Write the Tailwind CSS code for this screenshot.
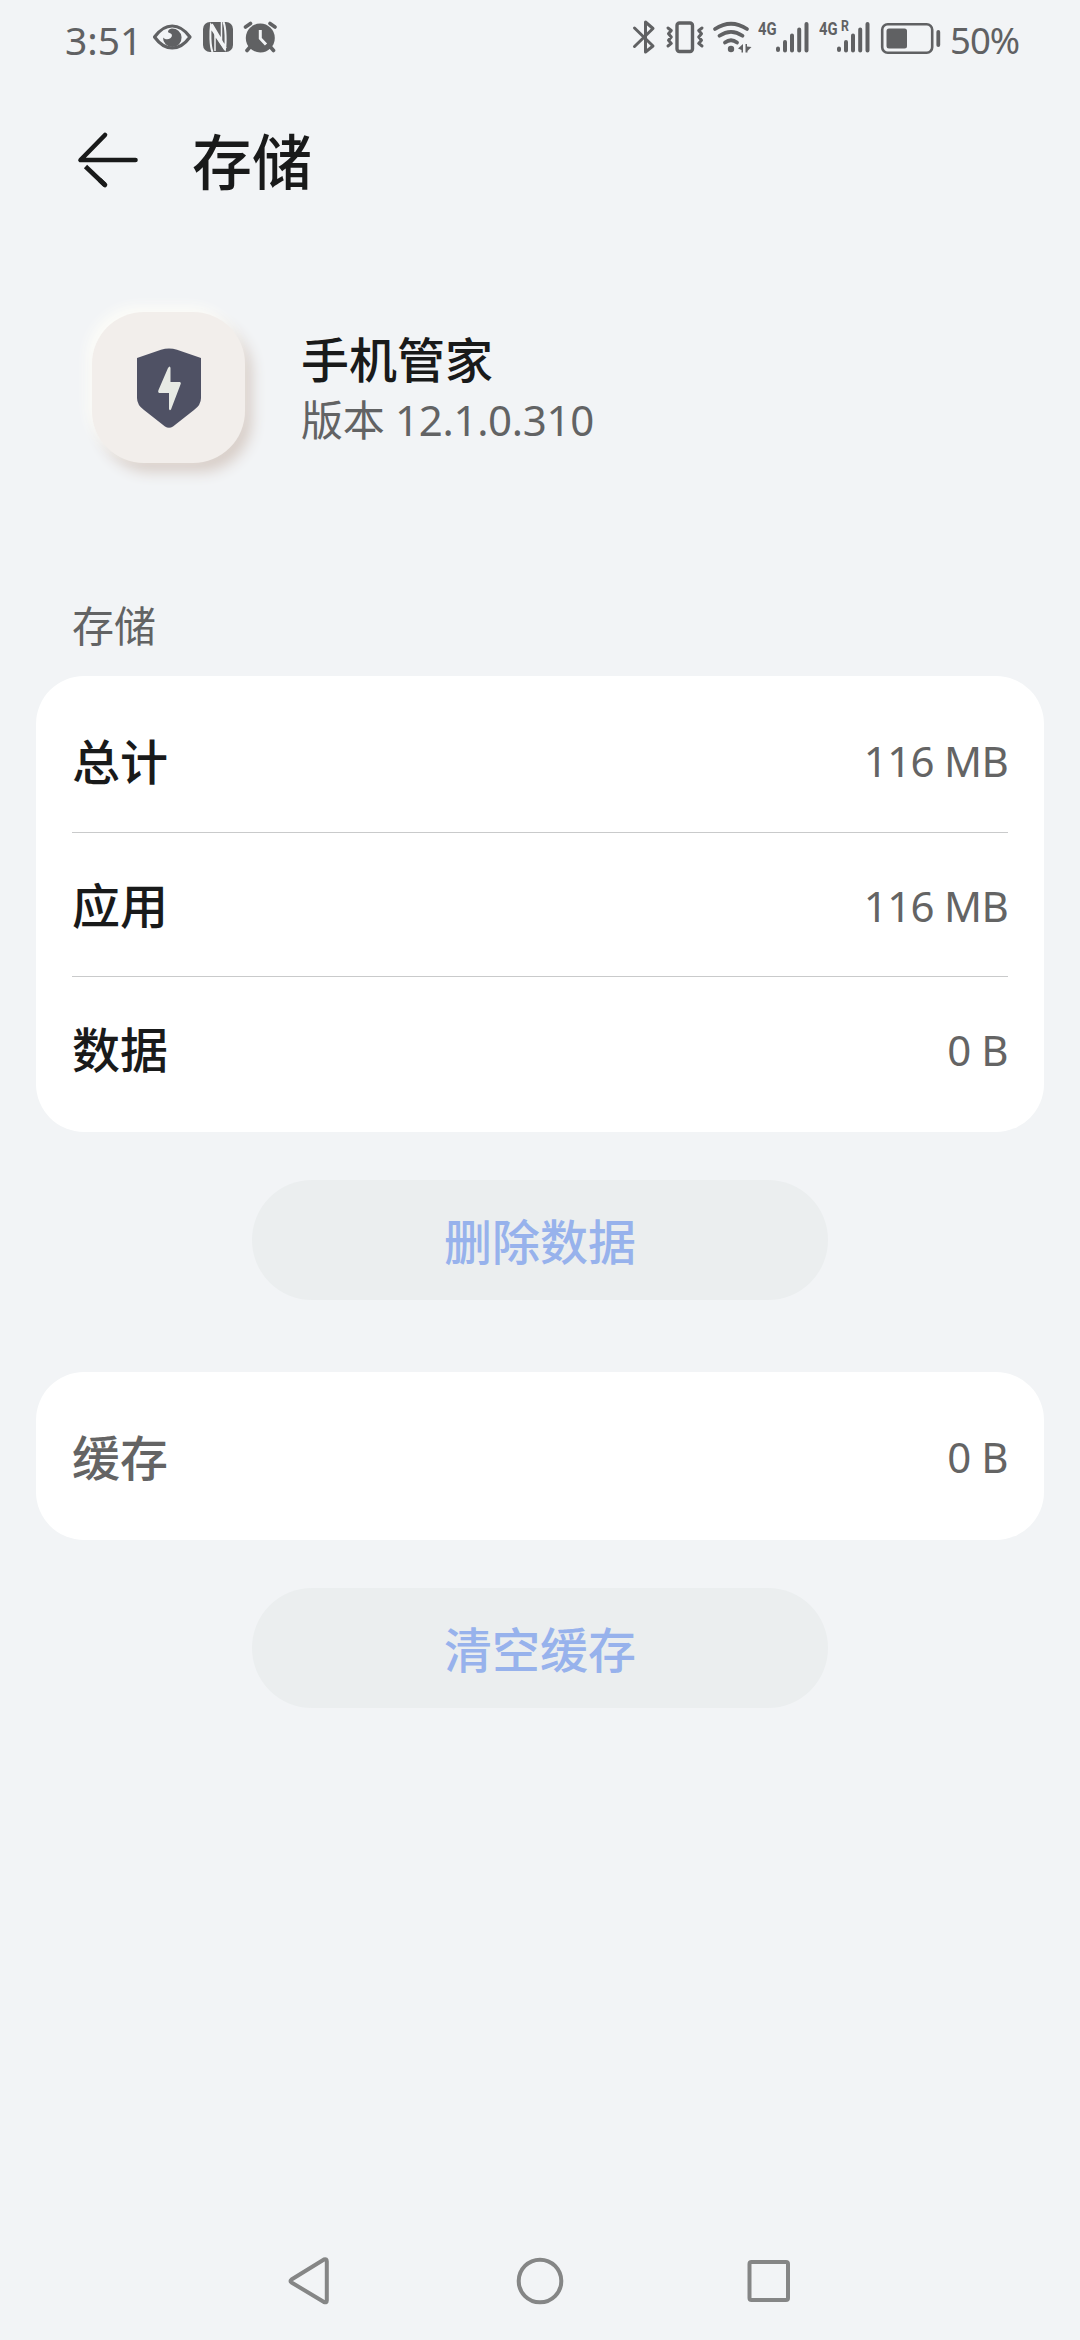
<!DOCTYPE html>
<html lang="zh-CN">
<head>
<meta charset="utf-8">
<title>存储</title>
<script src="https://cdn.jsdelivr.net/npm/@tailwindcss/browser@4"></script>
</head>
<body class="flex h-[2340px] w-[1080px] flex-col overflow-hidden bg-[#f2f4f6] font-['Noto_Sans','Noto_Sans_CJK_SC',sans-serif] text-[#191a1a]">

  <!-- Status bar -->
  <header class="flex h-20 shrink-0 justify-between pl-[65px] pr-[58px] text-[#606163]">
    <div class="flex">
      <span class="w-[86px] pt-[14px] text-[39px] leading-[52px]">3:51</span>
      <svg class="h-20 w-[130px]" viewBox="151 0 130 80" fill="none" stroke="currentColor">
        <path d="M154.500 37C160 29.500 165.500 26 172.200 26S184.500 29.500 190 37C184.500 44.500 179 48 172.200 48S160 44.500 154.500 37Z" stroke-width="3.200" stroke-linejoin="round"/>
        <path d="M171.500 28.500A9.300 9.300 0 1 1 163 37.500C164.500 39.500 168 40 170.300 38.300C172.800 36.300 172.500 33.500 169 32.700C167.500 32.500 167.500 29.500 171.500 28.500Z" fill="currentColor" stroke="none"/>
        <rect x="203" y="22" width="30" height="30" rx="7" fill="currentColor" stroke="none"/>
        <path d="M212.500 52C210 46 210 32 211 25L226 48M223.500 22C226 28 226 43 225 49L210.500 27" stroke="#f2f4f6" stroke-width="2"/>
        <path d="M215 51V35L225 50M221.500 22V40L212 24" stroke="#f2f4f6" stroke-width="1.500"/>
        <circle cx="260.300" cy="38" r="14.500" fill="currentColor" stroke="none"/>
        <path d="M245.500 27L250.500 23.500M275 27L270 23.500M250 47L247 50.500M270.500 47L273.500 50.500" stroke-width="3.600" stroke-linecap="round"/>
        <path d="M260.300 30V38.500L266 44.500" stroke="#f2f4f6" stroke-width="3" />
      </svg>
    </div>
    <div class="flex">
      <svg class="h-20 w-[127px]" viewBox="630 0 127 80" fill="none" stroke="currentColor" stroke-linecap="round" stroke-linejoin="round">
        <path d="M634.500 28L653 46L645.500 52V22L653 28.500L634.500 46.500" stroke-width="3"/>
        <rect x="677" y="23" width="15.500" height="28.500" rx="2.500" stroke-width="3.400"/>
        <path d="M668 28L671.300 30.500L668.500 33.800L671.300 37L668.500 40.200L671.300 43.400L668 46M702 28L698.700 30.500L701.500 33.800L698.700 37L701.500 40.200L698.700 43.400L702 46" stroke-width="3"/>
        <path d="M715 29Q731 18.500 747 29" stroke-width="3.800"/>
        <path d="M719.500 35.800Q731 28 742.500 35.800M725 42.500Q731 38 737 42.500" stroke-width="3.800"/>
        <circle cx="731" cy="49" r="3.200" fill="currentColor" stroke="none"/>
        <path d="M743 44V52.500H741.500V50L738 48.500ZM745.500 52.500V44H747V46.500L751.500 47L747.500 51V52.500Z" fill="currentColor" stroke="none"/>
      </svg>
      <div class="flex w-[61px] pl-[1px]">
        <span class="w-[18px] origin-left scale-x-[0.8] pt-[19px] font-['Roboto',sans-serif] text-[18.500px] font-bold leading-5">4G</span>
        <svg class="h-20 w-[35px] shrink-0" viewBox="776 0 35 80" stroke="currentColor" stroke-width="4" stroke-linecap="round">
          <path d="M778 48.500V50M785 42V50.500M792 35.500V50.500M799.200 29.500V50.500M806.500 24V50.500"/>
        </svg>
      </div>
      <div class="flex w-[61px] pl-px">
        <span class="w-[22px] origin-left scale-x-[0.8] pt-[19px] font-['Roboto',sans-serif] text-[18.500px] font-bold leading-5">4G</span>
        <div class="relative">
          <span class="absolute left-0 top-[20px] origin-left scale-x-[0.85] font-['Roboto',sans-serif] text-[14.500px] font-bold leading-[14px]">R</span>
          <svg class="-ml-[4px] h-20 w-[35px]" viewBox="776 0 35 80" stroke="currentColor" stroke-width="4" stroke-linecap="round">
            <path d="M778 48.500V50M785 42V50.500M792 35.500V50.500M799.200 29.500V50.500M806.500 24V50.500"/>
          </svg>
        </div>
      </div>
      <svg class="h-20 w-[71px]" viewBox="880 0 71 80" fill="none" stroke="currentColor">
        <rect x="883.200" y="24.200" width="50" height="28.500" rx="5.500" stroke-width="2.600"/>
        <rect x="887.500" y="28.500" width="20.500" height="20" rx="2.500" fill="currentColor" stroke="none"/>
        <path d="M939.300 32V45" stroke-width="3.800" stroke-linecap="round"/>
      </svg>
      <span class="w-[72px] whitespace-nowrap pt-[14px] text-[36.500px] leading-[52px] tracking-[-1px]">50%</span>
    </div>
  </header>

  <!-- Title bar -->
  <div class="flex h-[160px] shrink-0 items-center pl-[72px]">
    <svg class="h-[72px] w-[72px]" viewBox="72 123 72 72" fill="none" stroke="#191a1a" stroke-width="4.600" stroke-linecap="round" stroke-linejoin="round">
      <path d="M105 134L80.500 159H135.500"/>
      <path d="M105 184L85.500 165.500" stroke-linecap="butt"/>
      <path d="M105 184L100 179.300"/>
    </svg>
    <h1 class="ml-12 pb-[3px] font-['Noto_Sans_CJK_SC',sans-serif] text-[60px] font-medium leading-[80px]">存储</h1>
  </div>

  <!-- App summary -->
  <section class="flex h-[295px] shrink-0 items-center pl-[92px]">
    <div class="flex h-[151px] w-[153px] items-center justify-center rounded-[52px] bg-[#f2eeeb] shadow-[-5px_-6px_12px_#fcfcf8,7px_9px_14px_#d8cec8]">
      <svg class="h-20 w-16" viewBox="0 0 64 80">
        <path d="M24 1.800Q32 -1 40 1.800L64 10V50Q64 57 57 62L36 78.500Q32 81 28 78.500L7 62Q0 57 0 50V10Z" fill="#4f5164"/>
        <path d="M31 20Q33 17 33.500 20V34H43Q44.500 34.500 43.500 36.500L34 61.500Q32.500 63 32 61V45H22.500Q20.500 44.500 21.500 42Z" fill="#e7eae4"/>
      </svg>
    </div>
    <div class="ml-14">
      <h2 class="font-['Noto_Sans_CJK_SC',sans-serif] text-[48px] font-medium leading-[62px]">手机管家</h2>
      <p class="pt-[3px] text-[42px] leading-[58px] tracking-[-0.300px] text-[#626364]">版本 12.1.0.310</p>
    </div>
  </section>

  <main class="flex flex-col px-9">
    <h3 class="h-[141px] pl-9 pt-[60px] font-['Noto_Sans_CJK_SC',sans-serif] text-[42px] leading-[58px] text-[#626364]">存储</h3>

    <div class="rounded-[48px] bg-white px-9 py-3">
      <div class="flex h-[145px] items-center justify-between border-b border-[#c9cacb]">
        <span class="pb-[3px] font-['Noto_Sans_CJK_SC',sans-serif] text-[48px] font-medium">总计</span>
        <span class="pt-px text-[42px] tracking-[-0.700px] text-[#646464]">116 MB</span>
      </div>
      <div class="flex h-36 items-center justify-between border-b border-[#c9cacb]">
        <span class="pb-[3px] font-['Noto_Sans_CJK_SC',sans-serif] text-[48px] font-medium">应用</span>
        <span class="pt-px text-[42px] tracking-[-0.700px] text-[#646464]">116 MB</span>
      </div>
      <div class="flex h-[143px] items-center justify-between">
        <span class="pb-[3px] font-['Noto_Sans_CJK_SC',sans-serif] text-[48px] font-medium">数据</span>
        <span class="pt-px text-[42px] tracking-[-0.500px] text-[#646464]">0 B</span>
      </div>
    </div>

    <button class="mt-12 h-[120px] w-[576px] self-center rounded-full bg-[#ebeeef] pb-[2px] font-['Noto_Sans_CJK_SC',sans-serif] text-[48px] font-medium text-[#97b2ec]">删除数据</button>

    <div class="mt-[72px] flex h-[168px] items-center justify-between rounded-[48px] bg-white px-9">
      <span class="pb-[3px] font-['Noto_Sans_CJK_SC',sans-serif] text-[48px] font-medium text-[#646464]">缓存</span>
      <span class="pt-px text-[42px] tracking-[-0.500px] text-[#646464]">0 B</span>
    </div>

    <button class="mt-12 h-[120px] w-[576px] self-center rounded-full bg-[#ebeeef] pb-[2px] font-['Noto_Sans_CJK_SC',sans-serif] text-[48px] font-medium text-[#97b2ec]">清空缓存</button>
  </main>

  <!-- System navigation -->
  <nav class="mt-auto flex h-[118px] shrink-0 items-center justify-center gap-[165px] text-[#858686]">
    <svg class="h-16 w-16" viewBox="279 2249 64 64" fill="none" stroke="currentColor" stroke-width="4" stroke-linejoin="round">
      <path d="M291.500 2279.500L324 2259.500Q326.800 2258.500 326.800 2261.500V2300.500Q326.800 2303 324 2302L291.500 2282.500Q289.500 2281 291.500 2279.500Z"/>
    </svg>
    <svg class="h-16 w-16" viewBox="0 0 64 64" fill="none" stroke="currentColor" stroke-width="4"><circle cx="32" cy="32" r="21.300"/></svg>
    <svg class="h-16 w-16" viewBox="0 0 64 64" fill="none" stroke="currentColor" stroke-width="4"><rect x="12.500" y="13" width="38.500" height="38" rx="2"/></svg>
  </nav>
</body>
</html>
